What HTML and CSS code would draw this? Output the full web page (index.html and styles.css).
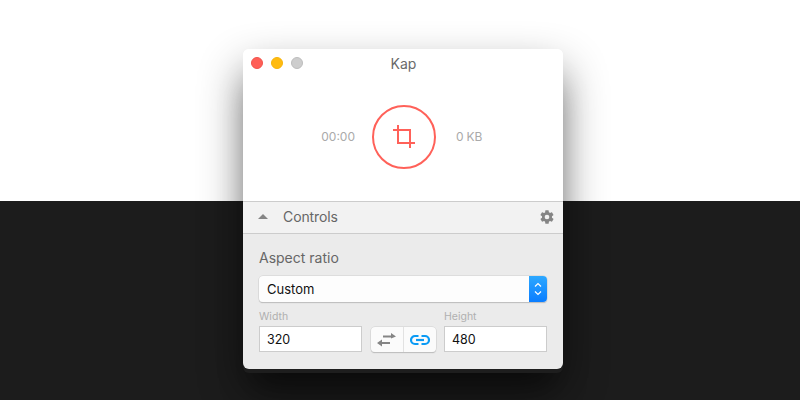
FILE: index.html
```html
<!DOCTYPE html>
<html lang="en">
<head>
    <meta charset="UTF-8">
    <title>Kap</title>
    <link rel="stylesheet" href="styles.css">
</head>
<body>
    <div class="backdrop-top"></div>
    <div class="backdrop-bottom"></div>

    <div class="window">
        <div class="record-area">
            <div class="titlebar">
                <div class="lights">
                    <span class="light red"></span>
                    <span class="light yellow"></span>
                    <span class="light gray"></span>
                </div>
                <div class="title">Kap</div>
            </div>
            <div class="recorder">
                <span class="stat stat-time">00:00</span>
                <div class="record-button">
                    <svg width="24" height="24" viewBox="0 0 24 24" fill="none" stroke="#ff6159" stroke-width="2">
                        <path d="M1 5H18V23"/>
                        <path d="M6 0V18H23"/>
                    </svg>
                </div>
                <span class="stat stat-size">0 KB</span>
            </div>
        </div>

        <div class="controls-bar">
            <span class="caret"></span>
            <span class="controls-label">Controls</span>
            <svg class="gear" width="16" height="16" viewBox="0 0 24 24" fill="#858585">
                <path d="M19.4 13c.04-.33.1-.66.1-1s-.06-.67-.1-1l2.1-1.65c.2-.15.25-.42.12-.64l-2-3.46c-.12-.22-.4-.3-.6-.22l-2.5 1c-.52-.4-1.08-.73-1.7-.98l-.37-2.65A.5.5 0 0 0 14 2h-4a.5.5 0 0 0-.5.42l-.37 2.65c-.62.25-1.18.58-1.7.98l-2.5-1c-.22-.08-.48 0-.6.22l-2 3.46c-.13.22-.07.49.12.64L4.57 11c-.04.33-.07.66-.07 1s.03.67.07 1l-2.11 1.65c-.19.15-.25.42-.12.64l2 3.46c.12.22.38.3.6.22l2.49-1c.52.4 1.08.73 1.7.98l.37 2.65c.04.24.25.42.5.42h4c.25 0 .46-.18.5-.42l.37-2.65c.62-.25 1.18-.58 1.7-.98l2.49 1c.22.08.48 0 .6-.22l2-3.46c.12-.22.07-.49-.12-.64L19.4 13zM12 15.5a3.5 3.5 0 1 1 0-7 3.5 3.5 0 0 1 0 7z"/>
            </svg>
        </div>

        <div class="panel">
            <div class="panel-label">Aspect ratio</div>
            <div class="select">
                <span class="select-value">Custom</span>
                <span class="select-arrows">
                    <svg width="8" height="16" viewBox="0 0 8 16" fill="none" stroke="#fff" stroke-width="1.2">
                        <path d="M1 5.5L4 2.5L7 5.5"/>
                        <path d="M1 10.5L4 13.5L7 10.5"/>
                    </svg>
                </span>
            </div>
            <div class="size-row">
                <div class="field">
                    <label class="field-label">Width</label>
                    <div class="field-input">320</div>
                </div>
                <div class="size-buttons">
                    <div class="size-button">
                        <svg width="20" height="14" viewBox="0 0 20 14" fill="#858585">
                            <path d="M6 2.5H14V0L19 3.5L14 5.5V4.5H6Z"/>
                            <path d="M5 9H13V11H5V13.5L0 10L5 6.5Z"/>
                        </svg>
                    </div>
                    <div class="size-button">
                        <svg width="20" height="12" viewBox="0 0 20 12" fill="none" stroke="#0a9bf5" stroke-width="2.2">
                            <path d="M8.5 2H5a4 4 0 0 0 0 8h3.5"/>
                            <path d="M11.5 2H15a4 4 0 0 1 0 8h-3.5"/>
                            <path d="M6 6h8"/>
                        </svg>
                    </div>
                </div>
                <div class="field">
                    <label class="field-label">Height</label>
                    <div class="field-input">480</div>
                </div>
            </div>
        </div>
    </div>
</body>
</html>
```

FILE: styles.css
```css
body {
    margin: 0;
    font-family: 'Inter', 'Liberation Sans', sans-serif;
    overflow: hidden;
}
.backdrop-top {
    height: 201px;
    background-color: #ffffff;
}
.backdrop-bottom {
    height: 199px;
    background-color: #1c1c1c;
}
.window {
    position: absolute;
    left: 243px;
    top: 49px;
    width: 320px;
    height: 320px;
    display: flex;
    flex-direction: column;
    border-radius: 6px;
    box-shadow: 0 4px 0 #1e1e1e, 0 30px 30px -10px rgba(0, 0, 0, 0.35), 0 20px 44px rgba(0, 0, 0, 0.45);
}
.record-area {
    height: 152px;
    background-color: #ffffff;
    border-radius: 6px 6px 0 0;
}
.titlebar {
    height: 28px;
    display: flex;
    align-items: center;
    position: relative;
}
.lights {
    display: flex;
    gap: 8px;
    padding-left: 8px;
}
.light {
    width: 12px;
    height: 12px;
    border-radius: 50%;
    box-sizing: border-box;
}
.light.red {
    background-color: #ff5f57;
    border: 1px solid #f2544c;
}
.light.yellow {
    background-color: #ffbb10;
    border: 1px solid #f7b40a;
}
.light.gray {
    background-color: #cdcdcd;
    border: 1px solid #bdbdbd;
}
.title {
    position: absolute;
    left: 1px;
    right: 0;
    text-align: center;
    font-size: 14px;
    color: #6a6a6a;
}
.recorder {
    display: flex;
    align-items: center;
    justify-content: center;
    padding-top: 28px;
    position: relative;
}
.stat {
    font-size: 12px;
    color: #aaaaaa;
}
.stat-time {
    position: absolute;
    right: 208px;
    top: 52px;
}
.stat-size {
    position: absolute;
    left: 213px;
    top: 52px;
    letter-spacing: -0.2px;
}
.record-button {
    width: 64px;
    height: 64px;
    margin-left: 2px;
    box-sizing: border-box;
    border: 2px solid #ff6159;
    border-radius: 50%;
    display: flex;
    align-items: center;
    justify-content: center;
}
.controls-bar {
    height: 29px;
    display: flex;
    align-items: center;
    background-color: #f2f2f2;
    border-top: 1px solid #cccccc;
    border-bottom: 1px solid #cccccc;
    padding: 0 8px 2px 15px;
}
.caret {
    width: 0;
    height: 0;
    border-left: 5px solid transparent;
    border-right: 5px solid transparent;
    border-bottom: 5px solid #858585;
    margin-right: 15px;
    margin-top: -1px;
}
.controls-label {
    font-size: 14px;
    color: #666666;
    flex: 1;
    letter-spacing: -0.1px;
}
.panel {
    flex: 1;
    background-color: #ebebeb;
    padding: 15px 16px 0;
    border-radius: 0 0 6px 6px;
}
.panel-label {
    font-size: 14px;
    color: #666666;
    line-height: 17px;
    margin-bottom: 10px;
}
.select {
    height: 26px;
    display: flex;
    background-color: #fdfdfd;
    border-radius: 4px;
    box-shadow: 0 0 0 0.5px #d0d0d0, 0 1px 1px #aaaaaa;
    overflow: hidden;
}
.select-value {
    flex: 1;
    font-size: 13px;
    line-height: 27px;
    padding-left: 8px;
    color: #111111;
}
.select-arrows {
    width: 18px;
    display: flex;
    align-items: center;
    justify-content: center;
    background: linear-gradient(#2da8ff, #0a7dff);
}
.size-row {
    display: flex;
    align-items: flex-end;
    margin-top: 7px;
}
.field {
    width: 103px;
}
.field-label {
    display: block;
    font-size: 10.5px;
    line-height: 16px;
    margin-bottom: 1px;
    color: #b0b0b0;
}
.field-input {
    height: 26px;
    box-sizing: border-box;
    background-color: #ffffff;
    border: 1px solid #cccccc;
    font-size: 12.5px;
    line-height: 25px;
    padding-left: 7px;
    color: #111111;
}
.size-buttons {
    display: flex;
    width: 65px;
    height: 25px;
    margin: 0 8px 0 9px;
    background-color: #fbfbfb;
    border-radius: 4px;
    box-shadow: 0 0 0 0.5px #d0d0d0, 0 1px 1px #aaaaaa;
}
.size-button {
    flex: 1;
    display: flex;
    align-items: center;
    justify-content: center;
}
.size-button + .size-button {
    border-left: 1px solid #e2e2e2;
}
```
